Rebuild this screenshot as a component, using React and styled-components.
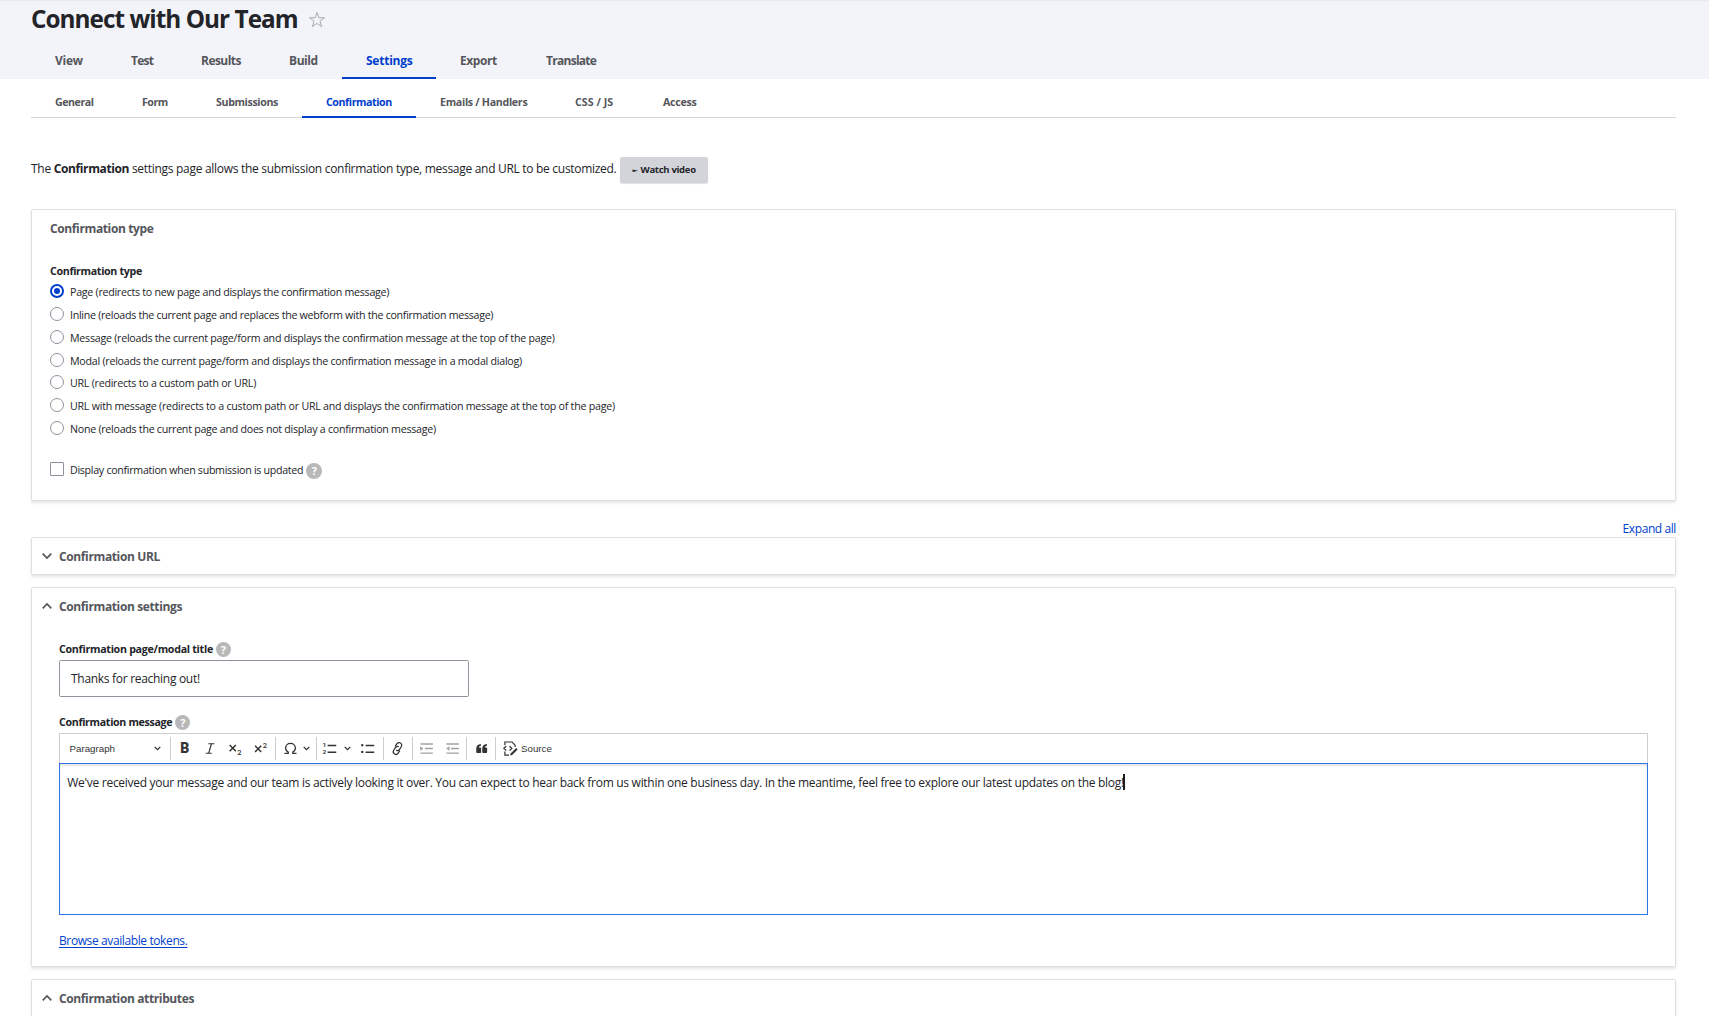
import React from "react";
import styled, { createGlobalStyle, css } from "styled-components";

const GlobalStyle = createGlobalStyle`
  * {
    box-sizing: border-box;
  }
  html, body {
    margin: 0;
    height: 1016px;
    overflow: hidden;
    background: #fff;
  }
  body {
    font-family: "Open Sans", "Noto Sans", sans-serif;
    font-size: 12px;
    line-height: 20px;
    letter-spacing: -0.0247em;
    color: #232429;
  }
`;

const bold = css`
  font-weight: 700;
  letter-spacing: -0.031em;
`;

/* ---------- header ---------- */

const Header = styled.header`
  display: flex;
  flex-direction: column;
  justify-content: space-between;
  height: 79px;
  padding: 2px 31px 0;
  border-top: 1px solid #e9eaf0;
  background: #f3f4f9;
`;

const TitleRow = styled.div`
  display: flex;
  align-items: center;
  gap: 10px;
`;

const PageTitle = styled.h1`
  margin: 0;
  font-size: 24.3px;
  font-weight: 700;
  line-height: 32px;
  letter-spacing: -0.0395em;
  white-space: nowrap;
`;

const StarIcon = styled.svg`
  width: 18px;
  height: 18px;
  margin-top: 1px;
  fill: none;
  stroke: #a9aab0;
`;

const Tabs = styled.nav`
  display: flex;
`;

const Tab = styled.a`
  ${bold}
  width: ${({ $width }) => $width}px;
  height: 37px;
  padding-left: 24px;
  line-height: 38px;
  white-space: nowrap;
  letter-spacing: ${({ $tracking }) => $tracking || -0.035}em;
  color: ${({ $active }) => ($active ? "#003ecc" : "#55565b")};
  box-shadow: ${({ $active }) => ($active ? "inset 0 -2px #003ecc" : "none")};
`;

const SubTabs = styled.nav`
  display: flex;
  align-items: flex-end;
  height: 39px;
  margin: 0 33px 0 31px;
  box-shadow: inset 0 -1px #d3d4d9;
`;

const SubTab = styled(Tab)`
  height: 26px;
  font-size: 10.67px;
  line-height: 20px;
`;

/* ---------- content ---------- */

const Content = styled.main`
  padding: 39px 33px 0 31px;
`;

const Intro = styled.div`
  display: flex;
  align-items: center;
  gap: 4px;
  height: 26px;
  margin-bottom: 26px;

  p {
    margin: 0 0 2px;
    white-space: nowrap;
  }
  strong {
    ${bold}
  }
`;

const VideoButton = styled.button`
  ${bold}
  display: flex;
  align-items: center;
  gap: 3px;
  width: 88px;
  height: 26px;
  padding: 0 0 0 12px;
  border: 0;
  border-radius: 2px;
  background: #d3d4d9;
  box-shadow: 0 1px 1px rgba(0, 0, 0, 0.12);
  color: #232429;
  font-family: inherit;
  font-size: 9.5px;
  line-height: 16px;
  white-space: nowrap;

  i {
    font: 7px/7px "DejaVu Sans", sans-serif;
    transform: scaleY(0.7);
  }
`;

const Card = styled.section`
  margin-bottom: 12px;
  border: 1px solid #dedfe4;
  border-radius: 1.5px;
  background: #fff;
  box-shadow: 0 2px 3px rgba(0, 0, 0, 0.1);
`;

const TypeCard = styled(Card)`
  height: 292px;
  margin-bottom: 18px;
  padding: 9px 18px 0;
`;

const CardTitle = styled.h2`
  ${bold}
  margin: 0;
  font-size: 12px;
  line-height: 20px;
  color: #55565b;
`;

const Label = styled.div`
  ${bold}
  display: flex;
  align-items: center;
  gap: 3px;
  height: 16px;
  margin-top: ${({ $top }) => $top}px;
  font-size: 10.67px;
  line-height: 16px;
  letter-spacing: ${({ $tracking }) => $tracking || -0.031}em;
  white-space: nowrap;
`;

const Options = styled.div`
  padding-top: 1px;
`;

const Option = styled.label`
  display: flex;
  align-items: center;
  height: 22.75px;
  font-size: 10.67px;
  white-space: nowrap;
`;

const OptionText = styled.span`
  padding-top: 2px;
  letter-spacing: ${({ $tracking }) => $tracking}em;
`;

const CheckRow = styled(Option)`
  height: 20px;
  margin-top: 20px;
`;

const Radio = styled.span`
  display: flex;
  align-items: center;
  justify-content: center;
  width: 14px;
  height: 14px;
  margin-right: 6px;
  border: ${({ $checked }) => ($checked ? "2px solid #003ecc" : "1px solid #8e929c")};
  border-radius: 50%;

  &::after {
    content: "";
    width: 6px;
    height: 6px;
    border-radius: 50%;
    background: ${({ $checked }) => ($checked ? "#003ecc" : "transparent")};
  }
`;

const Checkbox = styled.span`
  width: 14px;
  height: 14px;
  margin-right: 6px;
  border: 1px solid #8e929c;
  border-radius: 1px;
`;

const HelpBadge = styled.span`
  width: 15px;
  height: 15px;
  border-radius: 50%;
  background: #b8b8b8;
  color: #fff;
  font-size: 11px;
  font-weight: 700;
  line-height: 15px;
  letter-spacing: 0;
  text-align: center;
`;

const CheckHelp = styled(HelpBadge)`
  width: 16px;
  height: 16px;
  margin: 3px 0 0 3px;
`;

const ExpandAll = styled.div`
  display: flex;
  justify-content: flex-end;
  height: 18px;
  letter-spacing: -0.034em;
  color: #003ecc;
`;

const Summary = styled.div`
  display: flex;
  align-items: center;
  gap: 7px;
  height: 36px;
  padding-left: 10px;

  ${CardTitle} {
    padding-top: 2px;
  }
`;

const Chevron = styled.svg`
  width: 10px;
  height: 8px;
  fill: none;
  stroke: #55565b;
  stroke-width: 1.7;
  transform: ${({ $up }) => ($up ? "rotate(180deg)" : "none")};
`;

const CardBody = styled.div`
  padding: 0 27px 15px;
`;

const TextField = styled.div`
  display: flex;
  align-items: center;
  width: 410px;
  height: 37px;
  margin-top: 3px;
  padding: 1px 0 0 11px;
  border: 1px solid #8e929c;
  border-radius: 1.5px;
`;

const TokenLink = styled.a`
  display: block;
  width: max-content;
  margin-top: 16px;
  letter-spacing: -0.0325em;
  color: #003ecc;
  text-decoration: underline;
  text-underline-offset: 1.5px;
`;

/* ---------- editor ---------- */

const Toolbar = styled.div`
  display: flex;
  height: 30px;
  margin-top: 3px;
  border: 1px solid #ccced1;
  border-bottom: 0;
  color: #333;
  font-family: "Liberation Sans", Arial, sans-serif;
  font-size: 9.75px;
  letter-spacing: 0;
`;

const Group = styled.div`
  position: relative;
  display: flex;
  align-items: center;
  width: ${({ $width }) => $width}px;
  padding-left: ${({ $pad }) => $pad || 0}px;

  &:not(:last-child)::after {
    content: "";
    position: absolute;
    top: 3px;
    right: 0;
    width: 1px;
    height: 23px;
    background: #ccced1;
  }
`;

const HeadingSelect = styled.div`
  display: flex;
  align-items: center;
  justify-content: space-between;
  width: 100%;
  padding: 0 10px 0 9.5px;
`;

const Tool = styled.span`
  display: flex;
  align-items: center;
  justify-content: center;
  width: ${({ $width }) => $width || 25.3}px;
  height: 23px;
  opacity: ${({ $disabled }) => ($disabled ? 0.45 : 1)};
`;

const ToolIcon = styled.svg`
  width: 15px;
  height: 15px;
  fill: none;
  stroke: #333;
  stroke-width: 1.5;
  overflow: visible;

  text {
    fill: #333;
    stroke: none;
  }
`;

const BoldMark = styled.b`
  font: 900 14px/23px Roboto, sans-serif;
`;

const Arrow = styled.svg`
  width: 7px;
  height: 5px;
  fill: none;
  stroke: #333;
  stroke-width: 1.3;
`;

const SourceTool = styled.span`
  display: flex;
  align-items: center;
  gap: 3px;
  padding-left: 6px;
`;

const EditorArea = styled.div`
  height: 152px;
  padding: 9px 7.3px;
  border: 1px solid #2f74e4;
  box-shadow: inset 0 2px 2px rgba(0, 0, 0, 0.1);
`;

const EditorText = styled.p`
  display: flex;
  align-items: center;
  margin: 0;
  letter-spacing: -0.0242em;
  white-space: nowrap;
`;

const Caret = styled.span`
  width: 2px;
  height: 16px;
  margin: -2px 0 0 -0.5px;
  background: #1b1b1f;
`;

const tabs = [
  { label: "View", width: 76, tracking: -0.02 },
  { label: "Test", width: 70, tracking: -0.06 },
  { label: "Results", width: 88, tracking: -0.045 },
  { label: "Build", width: 77 },
  { label: "Settings", width: 94, tracking: -0.02 },
  { label: "Export", width: 86 },
  { label: "Translate", width: 100, tracking: -0.06 },
];

const subTabs = [
  { label: "General", width: 87, tracking: -0.045 },
  { label: "Form", width: 74, tracking: -0.045 },
  { label: "Submissions", width: 110 },
  { label: "Confirmation", width: 114, tracking: -0.04 },
  { label: "Emails / Handlers", width: 135, tracking: -0.029 },
  { label: "CSS / JS", width: 88, tracking: 0.005 },
  { label: "Access", width: 82, tracking: -0.025 },
];

const options = [
  { label: "Page (redirects to new page and displays the confirmation message)", tracking: -0.0255 },
  {
    label: "Inline (reloads the current page and replaces the webform with the confirmation message)",
    tracking: -0.0266,
  },
  {
    label: "Message (reloads the current page/form and displays the confirmation message at the top of the page)",
    tracking: -0.0234,
  },
  {
    label: "Modal (reloads the current page/form and displays the confirmation message in a modal dialog)",
    tracking: -0.0232,
  },
  { label: "URL (redirects to a custom path or URL)", tracking: -0.0235 },
  {
    label:
      "URL with message (redirects to a custom path or URL and displays the confirmation message at the top of the page)",
    tracking: -0.0232,
  },
  { label: "None (reloads the current page and does not display a confirmation message)", tracking: -0.025 },
];

const DropArrow = () => (
  <Arrow viewBox="0 0 7 5">
    <path d="M.7.9 3.5 3.7 6.3.9" />
  </Arrow>
);

const DetailsSummary = ({ title, open }) => (
  <Summary>
    <Chevron viewBox="0 0 10 8" $up={open}>
      <path d="M.7 1.7 5 6 9.3 1.7" />
    </Chevron>
    <CardTitle>{title}</CardTitle>
  </Summary>
);

const EditorToolbar = () => (
  <Toolbar>
    <Group $width={111}>
      <HeadingSelect>
        Paragraph
        <DropArrow />
      </HeadingSelect>
    </Group>
    <Group $width={105} $pad={1}>
      <Tool>
        <BoldMark>B</BoldMark>
      </Tool>
      <Tool>
        <ToolIcon viewBox="0 0 20 20">
          <path d="M8.500 3.700h8M5 16.300h8M12.500 4 9 16" />
        </ToolIcon>
      </Tool>
      <Tool>
        <ToolIcon viewBox="0 0 20 20">
          <path strokeWidth="1.9" d="m2.2 5.2 8.3 8.6M10.5 5.2l-8.3 8.6" />
          <text x="12.3" y="18.3" fontFamily="Roboto, sans-serif" fontWeight="500" fontSize="10">2</text>
        </ToolIcon>
      </Tool>
      <Tool>
        <ToolIcon viewBox="0 0 20 20">
          <path strokeWidth="1.9" d="m2.7 6.2 8.3 8.6M11 6.2l-8.3 8.6" />
          <text x="13" y="9.8" fontFamily="Roboto, sans-serif" fontWeight="500" fontSize="10">2</text>
        </ToolIcon>
      </Tool>
    </Group>
    <Group $width={41} $pad={2}>
      <Tool $width={24.5}>
        <ToolIcon viewBox="0 0 20 20">
          <path
            strokeWidth="1.7"
            d="M2 16.4h5v-1.6C4.7 13.6 3.5 11.6 3.5 9.3c0-3.500 2.800-6 6.500-6s6.500 2.500 6.500 6c0 2.300-1.200 4.300-3.500 5.500v1.600h5"
          />
        </ToolIcon>
      </Tool>
      <DropArrow />
    </Group>
    <Group $width={67}>
      <Tool $width={25}>
        <ToolIcon viewBox="0 0 20 20">
          <path strokeWidth="1.7" d="M7.500 6h11.500M7.500 15h11.500" />
          <text x="1" y="7.8" fontFamily="Roboto, sans-serif" fontWeight="700" fontSize="8">1</text>
          <text x="1" y="17.8" fontFamily="Roboto, sans-serif" fontWeight="700" fontSize="8">2</text>
        </ToolIcon>
      </Tool>
      <Tool $width={11}>
        <DropArrow />
      </Tool>
      <Tool $width={28}>
        <ToolIcon viewBox="0 0 20 20">
          <path strokeWidth="1.7" d="M7.500 6h11.500M7.500 15h11.500" />
          <path strokeWidth="3.2" strokeLinecap="round" d="M3 5.500h.01M3 14.500h.01" />
        </ToolIcon>
      </Tool>
    </Group>
    <Group $width={29}>
      <Tool $width={27}>
        <ToolIcon viewBox="0 0 24 24">
          <g transform="rotate(-12 12 12)" strokeWidth="2" strokeLinecap="round">
            <path d="m9.500 7.500 3-3a4.200 4.200 0 0 1 6 6l-3.500 3.500a4.200 4.200 0 0 1-5 .8" />
            <path d="m14.500 16.500-3 3a4.200 4.200 0 0 1-6-6L9 10a4.200 4.200 0 0 1 5-.8" />
          </g>
        </ToolIcon>
      </Tool>
    </Group>
    <Group $width={54}>
      <Tool $width={26} $disabled>
        <ToolIcon viewBox="0 0 20 20">
          <path strokeWidth="1.7" d="M2 4h16.500M8 10h10.500M2 16.300h16.500" />
          <path fill="#333" stroke="none" d="M1.500 7v6L6 10z" />
        </ToolIcon>
      </Tool>
      <Tool $width={26} $disabled>
        <ToolIcon viewBox="0 0 20 20">
          <path strokeWidth="1.7" d="M2 4h16.500M8 10h10.500M2 16.300h16.500" />
          <path fill="#333" stroke="none" d="M6 7v6l-4.500-3z" />
        </ToolIcon>
      </Tool>
    </Group>
    <Group $width={29} $pad={1}>
      <Tool $width={27}>
        <ToolIcon viewBox="0 0 20 20">
          <path
            fill="#333"
            stroke="none"
            d="M3 10.400a6.500 6.500 0 0 1 6.200-6.400v2.200c-1.600.3-2.400 1-2.800 2.300h2.100c.6 0 1 .4 1 1v5.500c0 .6-.4 1-1 1H4c-.6 0-1-.4-1-1zM11 10.400a6.500 6.500 0 0 1 6.200-6.400v2.200c-1.600.3-2.400 1-2.800 2.300h2.100c.6 0 1 .4 1 1v5.500c0 .6-.4 1-1 1H12c-.6 0-1-.4-1-1z"
          />
        </ToolIcon>
      </Tool>
    </Group>
    <Group $width={80} $pad={1}>
      <SourceTool>
        <ToolIcon viewBox="0 0 20 20">
          <path strokeWidth="1.6" d="M2.500 5.500V1.300h9.500L16.200 5.500V8M2.500 14v4.700h5.500" />
          <path strokeWidth="1.7" d="M4.300 7 1.200 9.800l3.100 2.800M8.700 7l3.100 2.800-3.100 2.800" />
          <path fill="#333" stroke="none" d="m17.500 9.300 2 2-7.300 7.300-2.700.6.700-2.600z" />
        </ToolIcon>
        Source
      </SourceTool>
    </Group>
  </Toolbar>
);

const App = () => (
  <>
    <GlobalStyle />
    <Header>
      <TitleRow>
        <PageTitle>Connect with Our Team</PageTitle>
        <StarIcon viewBox="0 0 18 18">
          <path d="m9 1.500 1.900 5.300h5.600l-4.500 3.400 1.700 5.500L9 12.400l-4.700 3.300L6 10.200 1.500 6.800h5.600z" />
        </StarIcon>
      </TitleRow>
      <Tabs>
        {tabs.map(({ label, width, tracking }) => (
          <Tab key={label} $width={width} $tracking={tracking} $active={label === "Settings"}>
            {label}
          </Tab>
        ))}
      </Tabs>
    </Header>
    <SubTabs>
      {subTabs.map(({ label, width, tracking }) => (
        <SubTab key={label} $width={width} $tracking={tracking} $active={label === "Confirmation"}>
          {label}
        </SubTab>
      ))}
    </SubTabs>
    <Content>
      <Intro>
        <p>
          The <strong>Confirmation</strong> settings page allows the submission confirmation type, message and URL to
          be customized.
        </p>
        <VideoButton>
          <i>►</i>
          Watch video
        </VideoButton>
      </Intro>

      <TypeCard>
        <CardTitle>Confirmation type</CardTitle>
        <Label $top={24}>Confirmation type</Label>
        <Options>
          {options.map(({ label, tracking }, id) => (
            <Option key={id}>
              <Radio $checked={id === 0} />
              <OptionText $tracking={tracking}>{label}</OptionText>
            </Option>
          ))}
        </Options>
        <CheckRow>
          <Checkbox />
          <OptionText $tracking={-0.0275}>Display confirmation when submission is updated</OptionText>
          <CheckHelp>?</CheckHelp>
        </CheckRow>
      </TypeCard>

      <ExpandAll>Expand all</ExpandAll>
      <Card>
        <DetailsSummary title="Confirmation URL" />
      </Card>

      <Card>
        <DetailsSummary title="Confirmation settings" open />
        <CardBody>
          <Label $top={17} $tracking={-0.026}>
            Confirmation page/modal title
            <HelpBadge>?</HelpBadge>
          </Label>
          <TextField>Thanks for reaching out!</TextField>
          <Label $top={17}>
            Confirmation message
            <HelpBadge>?</HelpBadge>
          </Label>
          <EditorToolbar />
          <EditorArea>
            <EditorText>
              We've received your message and our team is actively looking it over. You can expect to hear back from us
              within one business day. In the meantime, feel free to explore our latest updates on the blog!
              <Caret />
            </EditorText>
          </EditorArea>
          <TokenLink>Browse available tokens.</TokenLink>
        </CardBody>
      </Card>

      <Card>
        <DetailsSummary title="Confirmation attributes" open />
        <CardBody />
      </Card>
    </Content>
  </>
);

export default App;
